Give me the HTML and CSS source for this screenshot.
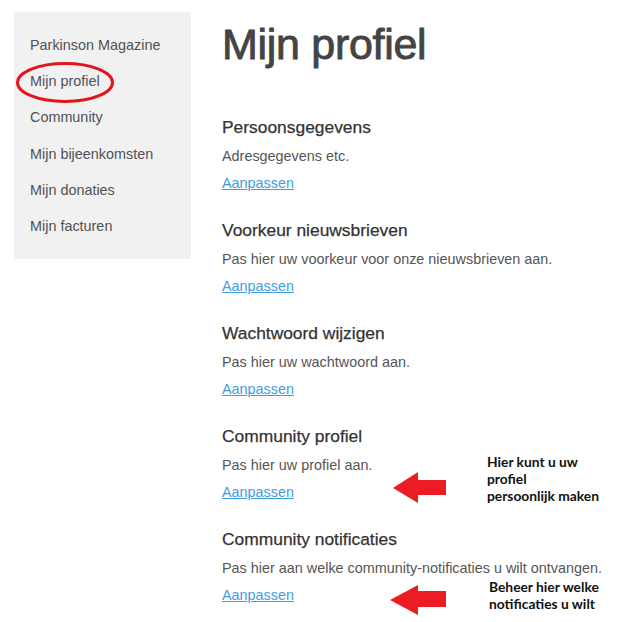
FILE: index.html
```html
<!DOCTYPE html>
<html lang="nl">
<head>
<meta charset="utf-8">
<title>Mijn profiel</title>
<link rel="stylesheet" href="styles.css">
</head>
<body>
<div class="page">
  <nav class="sidebar">
    <a class="nav-item" href="#">Parkinson Magazine</a>
    <a class="nav-item" href="#">Mijn profiel</a>
    <a class="nav-item" href="#">Community</a>
    <a class="nav-item" href="#">Mijn bijeenkomsten</a>
    <a class="nav-item" href="#">Mijn donaties</a>
    <a class="nav-item" href="#">Mijn facturen</a>
  </nav>
  <main class="content">
    <h1 class="title">Mijn profiel</h1>
    <section class="block">
      <h2 class="block-title">Persoonsgegevens</h2>
      <p class="block-text">Adresgegevens etc.</p>
      <a class="block-link" href="#">Aanpassen</a>
    </section>
    <section class="block">
      <h2 class="block-title">Voorkeur nieuwsbrieven</h2>
      <p class="block-text">Pas hier uw voorkeur voor onze nieuwsbrieven aan.</p>
      <a class="block-link" href="#">Aanpassen</a>
    </section>
    <section class="block">
      <h2 class="block-title">Wachtwoord wijzigen</h2>
      <p class="block-text">Pas hier uw wachtwoord aan.</p>
      <a class="block-link" href="#">Aanpassen</a>
    </section>
    <section class="block">
      <h2 class="block-title">Community profiel</h2>
      <p class="block-text">Pas hier uw profiel aan.</p>
      <a class="block-link" href="#">Aanpassen</a>
    </section>
    <section class="block">
      <h2 class="block-title">Community notificaties</h2>
      <p class="block-text">Pas hier aan welke community-notificaties u wilt ontvangen.</p>
      <a class="block-link" href="#">Aanpassen</a>
    </section>
  </main>
</div>

<svg class="mark mark-circle" width="102" height="46" viewBox="0 0 102 46" aria-hidden="true">
  <ellipse cx="51" cy="22.5" rx="47.5" ry="19" fill="none" stroke="#e3141c" stroke-width="3"/>
</svg>

<svg class="mark arrow-1" width="56" height="33" viewBox="0 0 56 33" aria-hidden="true">
  <polygon points="1,17 26,1 26,9 54,9 54,24 26,24 26,32" fill="#ec1c24"/>
</svg>
<div class="note note-1">Hier kunt u uw<br>profiel<br>persoonlijk maken</div>

<svg class="mark arrow-2" width="58" height="32" viewBox="0 0 58 32" aria-hidden="true">
  <polygon points="1,16 29,1 29,7 57,7 57,23 29,23 29,31" fill="#ec1c24"/>
</svg>
<div class="note note-2">Beheer hier welke<br>notificaties u wilt</div>
</body>
</html>
```

FILE: styles.css
```css
html, body {
  margin: 0;
  padding: 0;
  background: #ffffff;
}

body {
  font-family: "Liberation Sans", Arial, sans-serif;
  font-size: 14.4px;
  color: #555555;
  position: relative;
  min-height: 622px;
}

.page {
  display: flex;
  align-items: flex-start;
  gap: 31px;
  padding: 12px 0 0 14px;
}

.sidebar {
  width: 161px;
  flex: 0 0 auto;
  background: #f1f1f1;
  padding: 15px 0 15px 16px;
  display: flex;
  flex-direction: column;
}

.nav-item {
  display: block;
  line-height: 36.2px;
  color: #525252;
  text-decoration: none;
  white-space: nowrap;
}

.content {
  flex: 1 1 auto;
  padding-top: 11px;
}

.title {
  margin: 0 0 48px 0;
  font-size: 43px;
  line-height: 43px;
  font-weight: normal;
  color: #444444;
  -webkit-text-stroke: 0.9px #444444;
  letter-spacing: -0.3px;
}

.block {
  margin-bottom: 20px;
}

.block-title {
  margin: 0;
  font-size: 17.4px;
  line-height: 27.5px;
  font-weight: normal;
  color: #333333;
  -webkit-text-stroke: 0.25px #333333;
}

.block-text {
  margin: 0;
  line-height: 28px;
  color: #555555;
  white-space: nowrap;
}

.block-link {
  display: block;
  line-height: 27.5px;
  color: #3d9ee2;
  text-decoration: underline;
  width: max-content;
}

.mark {
  position: absolute;
  display: block;
}

.mark-circle {
  left: 14px;
  top: 60px;
}

.arrow-1 {
  left: 392px;
  top: 471px;
}

.arrow-2 {
  left: 389px;
  top: 584px;
}

.note {
  position: absolute;
  font-family: Lato, "Open Sans", sans-serif;
  font-weight: 700;
  font-size: 13.8px;
  line-height: 17px;
  color: #111111;
  white-space: nowrap;
}

.note-1 {
  left: 487px;
  top: 453px;
}

.note-2 {
  left: 489px;
  top: 578px;
}
```
